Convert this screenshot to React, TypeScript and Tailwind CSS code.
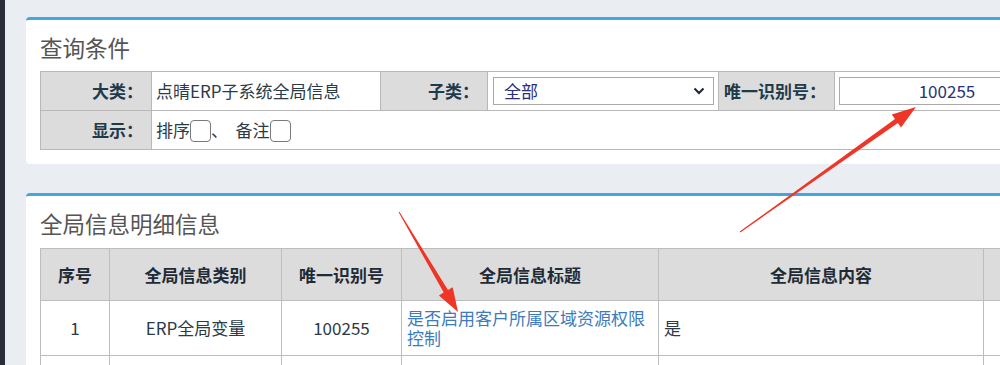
import React from "react";

function Arrows() {
  return (
    <svg
      className="absolute left-0 top-0 pointer-events-none"
      width={1000}
      height={365}
      viewBox="0 0 1000 365"
    >
      <polygon
        fill="#ef3526"
        points="740.3,232.4 897.9,122.9 901.0,127.4 916,107 891.8,114.4 895.0,118.9 739.7,231.6"
      />
      <polygon
        fill="#ef3526"
        points="398.6,212.3 443.7,292.6 438.9,295.4 458,312 452.7,287.2 448.0,290.0 399.4,211.8"
      />
    </svg>
  );
}

function Checkbox() {
  return (
    <span className="inline-block w-[21px] h-[22px] border-[1.5px] border-[#7a7a7a] rounded-[4px] bg-white align-middle"></span>
  );
}

export default function App() {
  const label =
    "bg-[#dcdcdc] border border-[#b8b8b8] text-right pr-[8px] font-bold text-[#1f3a4b]";
  const val = "bg-white border border-[#b8b8b8] text-left";
  const th =
    "bg-[#dcdcdc] border border-[#bdbdbd] font-bold text-[#1e2b36] text-center";
  const td = "bg-white border border-[#bdbdbd] text-[#2b3a46]";
  return (
    <div className="relative w-[1000px] h-[365px] overflow-hidden bg-[#eaeef2] flex items-start font-['Noto_Sans_CJK_SC',sans-serif] text-[17px] leading-[20px]">
      <div className="w-[5px] h-[365px] shrink-0 bg-[#2a2e3b]"></div>
      <div className="flex flex-col shrink-0 pl-[21px] pt-[17px] gap-[29px]">
        {/* Card 1 */}
        <div className="shrink-0 w-[1100px] h-[147px] bg-white border-t-[3px] border-[#45a5e2] rounded-[4px] pl-[14px]">
          <div className="mt-[12px] mb-[9px] h-[30px] leading-[30px] text-[22.5px] text-[#555]">
            查询条件
          </div>
          <table className="border-collapse table-fixed w-[1060px]">
            <colgroup>
              <col className="w-[111px]" />
              <col className="w-[229px]" />
              <col className="w-[107px]" />
              <col className="w-[231px]" />
              <col className="w-[116px]" />
              <col />
            </colgroup>
            <tbody>
              <tr className="h-[39px]">
                <td className={label}>大类：</td>
                <td className={`${val} pl-[4px] text-[#2a3b48]`}>点晴ERP子系统全局信息</td>
                <td className={label}>子类：</td>
                <td className={`${val} px-[5px]`}>
                  <div className="h-[28px] w-[221px] border border-[#a9a9a9] flex items-center justify-between pl-[10px] pr-[8px] text-[#2a2f7a]">
                    <span>全部</span>
                    <svg width="12" height="8" viewBox="0 0 12 8">
                      <path
                        d="M1.5 1.5 L6 6 L10.5 1.5"
                        fill="none"
                        stroke="#1d2430"
                        strokeWidth="2"
                      />
                    </svg>
                  </div>
                </td>
                <td className={label}>唯一识别号：</td>
                <td className={`${val} pl-[4px]`}>
                  <div className="h-[28px] w-[216px] border border-[#a9a9a9] flex items-center justify-center text-[#2a2f7a]">
                    100255
                  </div>
                </td>
              </tr>
              <tr className="h-[39px]">
                <td className={label}>显示：</td>
                <td className={`${val} pl-[4px] text-[#2a3b48]`} colSpan={5}>
                  <span className="align-middle">排序</span>
                  <Checkbox />
                  <span className="align-middle">、&nbsp;&nbsp;备注</span>
                  <Checkbox />
                </td>
              </tr>
            </tbody>
          </table>
        </div>

        {/* Card 2 */}
        <div className="shrink-0 w-[1100px] h-[300px] bg-white border-t-[3px] border-[#45a5e2] rounded-[4px] pl-[14px]">
          <div className="mt-[12px] mb-[10px] h-[30px] leading-[30px] text-[22.5px] text-[#555]">
            全局信息明细信息
          </div>
          <table className="border-collapse table-fixed w-[1060px]">
            <colgroup>
              <col className="w-[69px]" />
              <col className="w-[172px]" />
              <col className="w-[120px]" />
              <col className="w-[257px]" />
              <col className="w-[325px]" />
              <col />
            </colgroup>
            <thead>
              <tr className="h-[52px]">
                <th className={th}>序号</th>
                <th className={th}>全局信息类别</th>
                <th className={th}>唯一识别号</th>
                <th className={th}>全局信息标题</th>
                <th className={th}>全局信息内容</th>
                <th className={th}></th>
              </tr>
            </thead>
            <tbody>
              <tr className="h-[55px]">
                <td className={`${td} text-center`}>1</td>
                <td className={`${td} text-center`}>ERP全局变量</td>
                <td className={`${td} text-center`}>100255</td>
                <td className={`${td} pl-[5px] pr-[4px] text-[#3e7bbb]`}>
                  是否启用客户所属区域资源权限控制
                </td>
                <td className={`${td} pl-[5px]`}>是</td>
                <td className={td}></td>
              </tr>
              <tr className="h-[40px]">
                <td className={td}></td>
                <td className={td}></td>
                <td className={td}></td>
                <td className={td}></td>
                <td className={td}></td>
                <td className={td}></td>
              </tr>
            </tbody>
          </table>
        </div>
      </div>
      <Arrows />
    </div>
  );
}
